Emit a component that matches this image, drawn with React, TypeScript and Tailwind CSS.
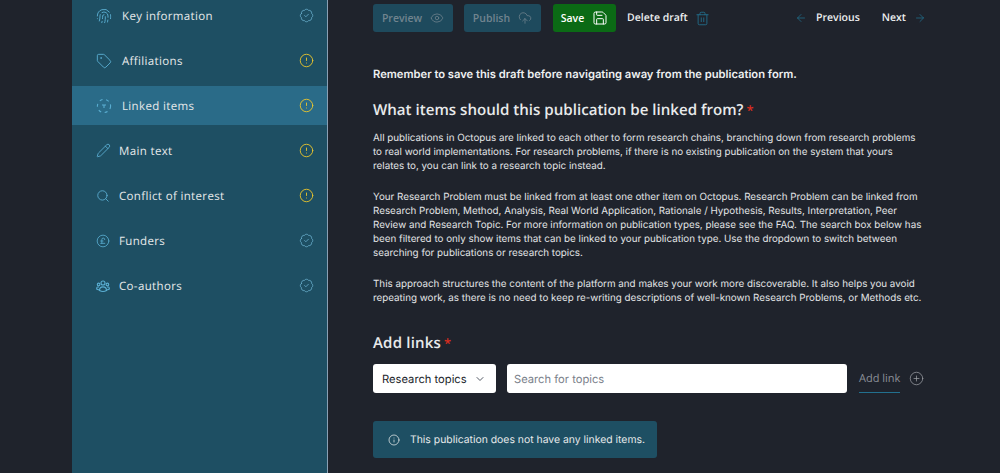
import React from "react";
import { Fingerprint, Tag, Pencil, Search, CirclePoundSterling, BadgeCheck, CircleAlert, Eye, CloudUpload, Save, Trash2, ArrowLeft, ArrowRight, ChevronDown, Info, CirclePlus } from "lucide-react";

const head = { fontFamily: '"Open Sans", "Liberation Sans", sans-serif' };

function LinkedIcon() {
  return (
    <svg width="16" height="16" viewBox="0 0 16 16" fill="none" stroke="#5aaed2" strokeWidth="1.1" className="shrink-0">
      <circle cx="8" cy="8" r="6.6" strokeDasharray="3 3.6" />
      <path d="M6 7h4M8 7v3" />
    </svg>
  );
}

function TeamIcon() {
  return (
    <svg width="14" height="14" viewBox="0 0 14 14" fill="none" stroke="#5aaed2" strokeWidth="1.1" className="shrink-0">
      <circle cx="7" cy="4" r="2" />
      <circle cx="2.6" cy="5.4" r="1.3" />
      <circle cx="11.4" cy="5.4" r="1.3" />
      <path d="M3.5 11.5c0-2.6 1.5-3.6 3.5-3.6s3.5 1 3.5 3.6c-2 1.2-5 1.2-7 0z" />
      <path d="M3 8H1.6C.9 8 .6 9 .7 10l2.3 1M11 8h1.4c.7 0 1 1 .9 2l-2.3 1" />
    </svg>
  );
}

type Row = { label: string; icon: React.ReactNode; ok: boolean; active?: boolean; wide?: boolean };
const ic = "shrink-0 text-[#5aaed2]";
const rows: Row[] = [
  { label: "Key information", icon: <Fingerprint size={16} strokeWidth={1.4} className={ic} />, ok: true, wide: true },
  { label: "Affiliations", icon: <Tag size={16} strokeWidth={1.4} className={ic} />, ok: false, wide: true },
  { label: "Linked items", icon: <LinkedIcon />, ok: false, active: true, wide: true },
  { label: "Main text", icon: <Pencil size={15} strokeWidth={1.4} className={ic} />, ok: false },
  { label: "Conflict of interest", icon: <Search size={14} strokeWidth={1.5} className={ic} />, ok: false },
  { label: "Funders", icon: <CirclePoundSterling size={14} strokeWidth={1.4} className={ic} />, ok: true },
  { label: "Co-authors", icon: <TeamIcon />, ok: true },
];

function SideRow({ r }: { r: Row }) {
  return (
    <div className={`flex h-[39px] items-center pl-6 pr-[13px] ${r.active ? "bg-[#2a6b88]" : ""}`}>
      <span className={`flex items-center justify-start ${r.wide ? "w-[26px]" : "w-[23px]"}`}>{r.icon}</span>
      <span className="flex-1 pt-[2px] text-[11.5px] tracking-[0.35px] text-[#e6e9ea]" style={head}>{r.label}</span>
      {r.ok ? (
        <BadgeCheck size={15} strokeWidth={1.2} className="text-[#6fb6d4]" />
      ) : (
        <CircleAlert size={15} strokeWidth={1.4} className="text-[#f0c82a]" />
      )}
    </div>
  );
}

function Para({ children, className = "" }: { children: React.ReactNode; className?: string }) {
  return <p className={`text-[9.82px] leading-[14px] text-[#e2e4e6] ${className}`}>{children}</p>;
}

export default function App() {
  return (
    <div className="flex h-[473px] w-[1000px] overflow-hidden bg-[#1f232c] [text-rendering:geometricPrecision]" style={{ fontFamily: 'Inter, "Liberation Sans", sans-serif' }}>
      <aside className="ml-[72px] flex h-[477px] w-[256px] shrink-0 flex-col gap-[6px] border-r border-[#8aa0b4] bg-[#1e4f63] -mt-[4px]">
        {rows.map((r) => (
          <SideRow key={r.label} r={r} />
        ))}
      </aside>
      <main className="w-[597px] shrink-0 pl-[45px] pt-[4px]">
        <div className="-mr-[2px] flex h-[28px] items-center text-[10.5px] font-semibold" style={head}>
          <button className="flex h-[28px] w-[80px] items-center justify-center gap-[8px] rounded-[3px] bg-[#1e4a5d] text-[#71848f]">
            <span className="pt-[2px]">Preview</span> <Eye size={14} strokeWidth={1.3} />
          </button>
          <button className="ml-[11px] flex h-[28px] w-[77px] items-center justify-center gap-[8px] rounded-[3px] bg-[#1e4a5d] text-[#71848f]">
            <span className="pt-[2px]">Publish</span> <CloudUpload size={14} strokeWidth={1.3} />
          </button>
          <button className="ml-[12px] flex h-[28px] w-[63px] items-center justify-center gap-[8px] rounded-[3px] bg-[#0b6a15] text-white">
            <span className="pt-[2px]">Save</span> <Save size={16} strokeWidth={1.5} />
          </button>
          <span className="ml-[11px] pt-[2px] text-[#eceeef]">Delete draft</span>
          <Trash2 size={15} strokeWidth={1.4} className="ml-[7px] text-[#22708f]" />
          <span className="flex-1" />
          <ArrowLeft size={12} strokeWidth={1.5} className="text-[#22708f]" />
          <span className="ml-[9px] pt-[2px] text-[#eceeef]">Previous</span>
          <span className="ml-[22px] pt-[2px] text-[#eceeef]">Next</span>
          <ArrowRight size={12} strokeWidth={1.5} className="ml-[8px] mr-[1px] text-[#22708f]" />
        </div>

        <p className="mt-[35px] text-[11.2px] font-semibold leading-[14px] text-[#eef0f1]">
          Remember to save this draft before navigating away from the publication form.
        </p>
        <h2 className="mt-[19px] text-[15.1px] font-semibold leading-[20px] text-[#e8eaeb]" style={head}>
          What items should this publication be linked from?<span className="ml-[3px] text-[13px] text-[#d92d20]">*</span>
        </h2>
        <Para className="mt-[11px]">
          All publications in Octopus are linked to each other to form research chains, branching down from research problems to real world implementations. For research problems, if there is no existing publication on the system that yours relates to, you can link to a research topic instead.
        </Para>
        <Para className="mt-[17px]">
          Your Research Problem must be linked from at least one other item on Octopus. Research Problem can be linked from Research Problem, Method, Analysis, Real World Application, Rationale / Hypothesis, Results, Interpretation, Peer Review and Research Topic. For more information on publication types, please see the FAQ. The search box below has been filtered to only show items that can be linked to your publication type. Use the dropdown to switch between searching for publications or research topics.
        </Para>
        <Para className="mt-[17px]">
          This approach structures the content of the platform and makes your work more discoverable. It also helps you avoid repeating work, as there is no need to keep re-writing descriptions of well-known Research Problems, or Methods etc.
        </Para>

        <h3 className="mt-[28px] text-[15px] font-semibold leading-[20px] tracking-[0.2px] text-[#e8eaeb]" style={head}>
          Add links<span className="ml-[3px] text-[13px] text-[#d92d20]">*</span>
        </h3>
        <div className="mt-[11px] flex items-center">
          <div className="flex h-[29px] w-[123px] items-center justify-between rounded-[3px] bg-white pl-[9px] pr-[10px] text-[11.2px] text-[#22252b]">
            <span className="pt-[2px]">Research topics</span> <ChevronDown size={12} className="text-[#555b66]" />
          </div>
          <div className="ml-[11px] flex h-[29px] w-[340px] items-center rounded-[3px] bg-white pl-[7px] pt-[2px] text-[11.2px] text-[#7b818b]">
            Search for topics
          </div>
          <span className="ml-[12px] flex h-[28px] shrink-0 items-center border-b border-[#22708f] pt-[2px] text-[11px] font-medium text-[#8b8f97]" style={head}>Add link</span>
          <CirclePlus size={15} strokeWidth={1.1} className="ml-[9px] shrink-0 text-[#a5a8ad]" />
        </div>
        <div className="mt-[28px] flex h-[37px] w-[284px] items-center gap-[10px] rounded-[3px] bg-[#1e4f63] pl-[15px] text-[10.4px] text-[#e6e9ea]">
          <Info size={12} strokeWidth={1.5} />
          This publication does not have any linked items.
        </div>
      </main>
    </div>
  );
}
